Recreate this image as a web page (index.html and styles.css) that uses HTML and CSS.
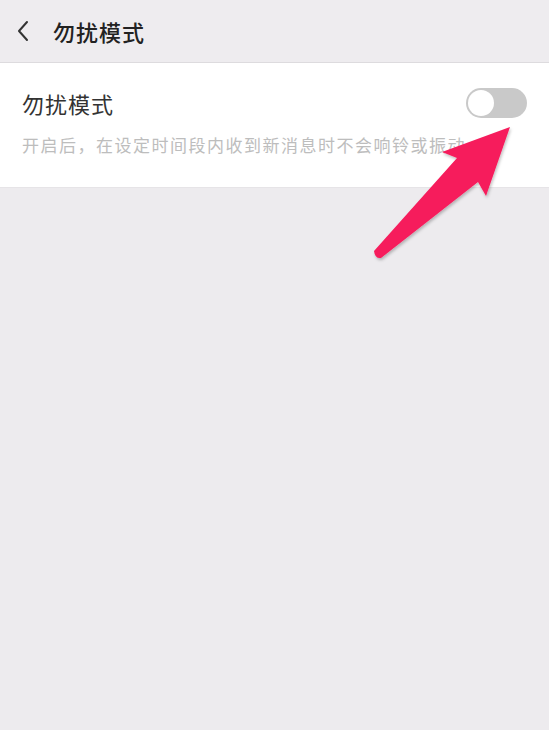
FILE: index.html
```html
<!DOCTYPE html>
<html lang="zh-CN">
<head>
  <meta charset="UTF-8" />
  <meta name="viewport" content="width=device-width, initial-scale=1.0" />
  <title>勿扰模式</title>
  <link rel="stylesheet" href="styles.css">
</head>
<body>
  <div class="page">
    <header class="topbar">
      <svg class="back" width="14" height="22" viewBox="0 0 14 22">
        <path d="M11 2 L3 11 L11 20" fill="none" stroke="#333" stroke-width="2" stroke-linecap="round" stroke-linejoin="round"/>
      </svg>
      <h1 class="topbar-title">勿扰模式</h1>
    </header>

    <section class="card">
      <div class="row">
        <span class="row-title">勿扰模式</span>
        <span class="switch"><span class="knob"></span></span>
      </div>
      <p class="row-desc">开启后，在设定时间段内收到新消息时不会响铃或振动</p>
    </section>

    <!-- pointer drawn over the switch -->
    <svg class="pointer" width="549" height="730" viewBox="0 0 549 730">
      <defs>
        <filter id="shade" x="-20%" y="-20%" width="140%" height="140%">
          <feDropShadow dx="1" dy="2" stdDeviation="1.5" flood-color="#000" flood-opacity="0.25"/>
        </filter>
      </defs>
      <path d="M374 251 L457 158 L442 152 L510 127 L486 196 L478 182 L381 258 Q375 259 374 251 Z" fill="#f61c5c" filter="url(#shade)"/>
    </svg>
  </div>
</body>
</html>
```

FILE: styles.css
```css
body {
  margin: 0;
  background: #edebee;
  font-family: "Noto Sans CJK SC", "Noto Sans", sans-serif;
}
.page {
  position: relative;
  width: 549px;
  height: 730px;
  overflow: hidden;
}
.topbar {
  height: 62px;
  display: flex;
  align-items: center;
  padding-left: 16px;
  background: #eeecef;
  border-bottom: 1px solid #dddbde;
}
.back {
  display: block;
}
.topbar-title {
  margin: 0 0 0 23px;
  font-size: 22px;
  font-weight: 500;
  letter-spacing: 1px;
  color: #222;
}
.card {
  background: #fff;
  padding: 24px 22px 30px;
  border-bottom: 1px solid #e6e4e7;
}
.row {
  display: flex;
  align-items: center;
  justify-content: space-between;
  height: 32px;
}
.row-title {
  font-size: 22px;
  letter-spacing: 1px;
  color: #333;
}
.switch {
  position: relative;
  width: 61px;
  height: 30px;
  border-radius: 15px;
  background: #c9c9c9;
}
.knob {
  position: absolute;
  left: 2px;
  top: 2px;
  width: 26px;
  height: 26px;
  border-radius: 50%;
  background: #fff;
}
.row-desc {
  margin: 14px 0 0;
  font-size: 17px;
  line-height: 24px;
  letter-spacing: 1.5px;
  color: #bdbdbd;
  white-space: nowrap;
}
.pointer {
  position: absolute;
  left: 0;
  top: 0;
  pointer-events: none;
}
```
